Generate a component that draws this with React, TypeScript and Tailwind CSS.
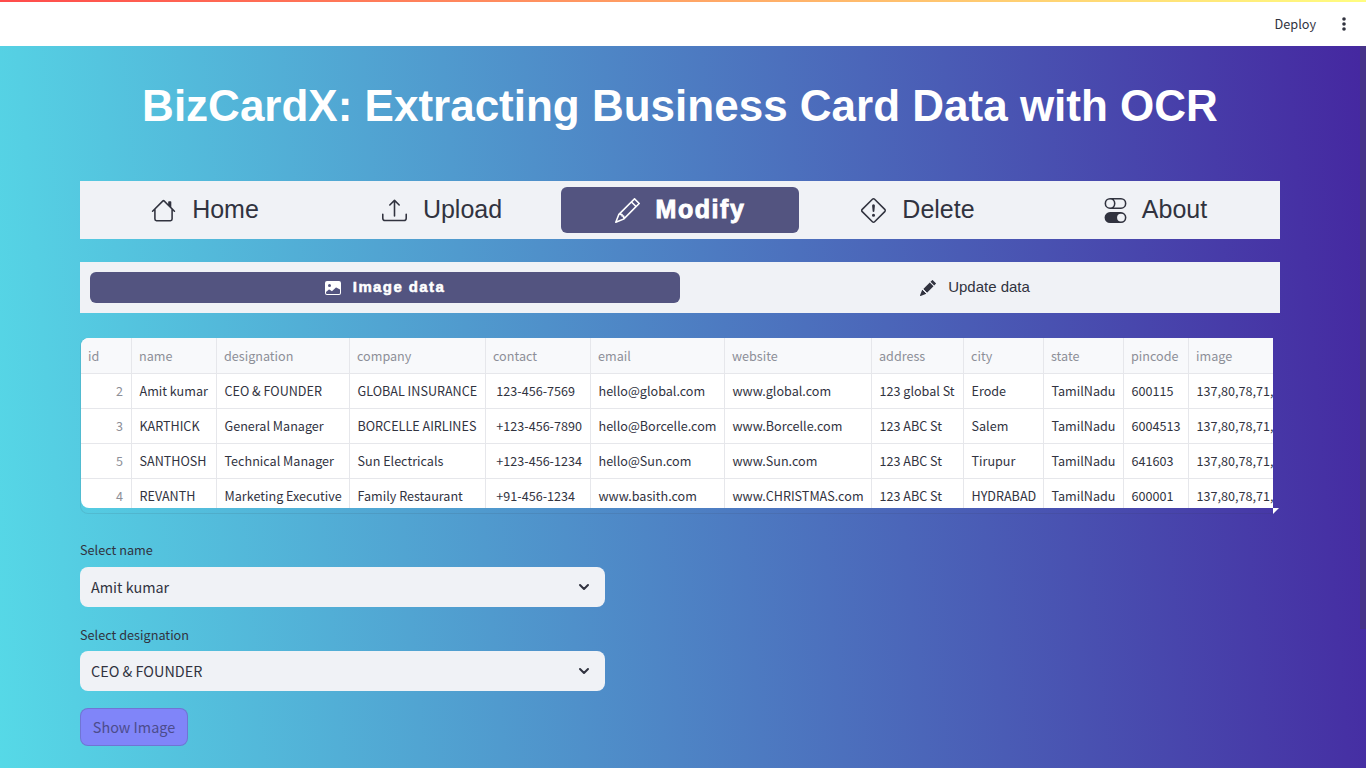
import { BsHouse, BsUpload, BsPencil, BsExclamationDiamond, BsToggles, BsImageFill, BsPencilFill } from "react-icons/bs";
import { ChevronDown } from "lucide-react";
import type { ReactNode } from "react";

const source = "font-['Noto_Sans_CJK_SC','Noto_Sans',sans-serif]";
const arial = "font-['Liberation_Sans',Arial,sans-serif]";

const rows = [
  ["2", "Amit kumar", "CEO & FOUNDER", "GLOBAL INSURANCE", " 123-456-7569", "hello@global.com", "www.global.com", "123 global St", "Erode", "TamilNadu", "600115", "137,80,78,71,13,10,26,10"],
  ["3", "KARTHICK", "General Manager", "BORCELLE AIRLINES", " +123-456-7890", "hello@Borcelle.com", "www.Borcelle.com", "123 ABC St", "Salem", "TamilNadu", "6004513", "137,80,78,71,13,10,26,10"],
  ["5", "SANTHOSH", "Technical Manager", "Sun Electricals", " +123-456-1234", "hello@Sun.com", "www.Sun.com", "123 ABC St", "Tirupur", "TamilNadu", "641603", "137,80,78,71,13,10,26,10"],
  ["4", "REVANTH", "Marketing Executive", "Family Restaurant", " +91-456-1234", "www.basith.com", "www.CHRISTMAS.com", "123 ABC St", "HYDRABAD", "TamilNadu", "600001", "137,80,78,71,13,10,26,10"],
];

const headers = ["id", "name", "designation", "company", "contact", "email", "website", "address", "city", "state", "pincode", "image"];

function NavItem({ icon, label, active, extra = "", gap = "mr-[16px]" }: { icon: ReactNode; label: string; active?: boolean; extra?: string; gap?: string }) {
  return (
    <div className={(active ? "flex items-center justify-center h-[46px] w-[238px] rounded-md bg-[#535480] text-white " : "flex items-center justify-center h-[46px] w-[238px] text-[#31333f] ") + extra}>
      <span className={`${gap} flex`}>{icon}</span>
      <span className={active ? "text-[25px] font-bold tracking-[1.55px] [-webkit-text-stroke:0.9px_white]" : "text-[25px]"}>{label}</span>
    </div>
  );
}

function Select({ label, value, gap = "mt-[7px]" }: { label: string; value: string; gap?: string }) {
  return (
    <div className="w-[525px]">
      <div className="h-[20px] text-[12.7px] leading-[20px] text-[#31333f]">{label}</div>
      <div className={`${gap} flex h-[40px] items-center justify-between rounded-lg bg-[#f0f2f6] pl-[11px] pr-[13px] text-[14.4px] text-[#31333f]`}>
        <span>{value}</span>
        <ChevronDown size={16} strokeWidth={3} />
      </div>
    </div>
  );
}

export default function App() {
  return (
    <div className={`relative h-screen w-full overflow-hidden ${source}`}>
      <header className="relative flex h-[46px] items-center justify-end bg-white pt-[2px]">
        <div className="absolute left-0 right-0 top-0 h-[2px] bg-[linear-gradient(90deg,#ff4b4b,#fffd80)]" />
        <span className="mr-[20px] text-[12.7px] text-[#31333f]">Deploy</span>
        <svg width="16" height="16" viewBox="0 0 16 16" className="mr-[14px] text-[#31333f]" fill="currentColor">
          <circle cx="8" cy="3" r="1.8" />
          <circle cx="8" cy="8" r="1.8" />
          <circle cx="8" cy="13" r="1.8" />
        </svg>
      </header>

      <main className="h-[722px] bg-[linear-gradient(85deg,#56d9e7,#4527a0)] pl-20">
        <div className="w-[1200px]">
          <h1 className={`${arial} pt-[33px] text-center text-[44px] font-bold leading-[54px] text-white`}>
            BizCardX: Extracting Business Card Data with OCR
          </h1>

          <nav className={`${arial} mt-[48px] flex h-[58px] items-center bg-[#f0f2f6] px-[5px]`}>
            <NavItem icon={<BsHouse size={25} />} label="Home" extra="pl-[2px]" />
            <NavItem icon={<BsUpload size={25} />} label="Upload" />
            <NavItem active icon={<BsPencil size={25} />} label="Modify" />
            <NavItem icon={<BsExclamationDiamond size={25} />} label="Delete" />
            <NavItem icon={<BsToggles size={25} />} label="About" gap="mr-[14px]" extra="pr-[2px]" />
          </nav>

          <div className={`${arial} mt-[23px] flex h-[51px] items-center bg-[#f0f2f6] px-[10px]`}>
            <div className="flex h-[31px] w-[590px] items-center justify-center rounded-md bg-[#535480] text-white">
              <BsImageFill size={16} className="mr-[12px]" />
              <span className="text-[15px] font-bold tracking-[1.4px] [-webkit-text-stroke:0.5px_white]">Image data</span>
            </div>
            <div className="flex h-[31px] w-[590px] items-center justify-center text-[#31333f]">
              <BsPencilFill size={16} className="mr-[12px]" />
              <span className="text-[15px]">Update data</span>
            </div>
          </div>

          <div className="relative mt-[25px] h-[176px] w-[1199px] rounded-lg border border-[rgba(49,51,63,0.1)] border-t-0 border-r-0">
            <div className="h-[170px] w-[1192px] overflow-hidden rounded-l-lg bg-white">
              <table className="w-[1260px] table-fixed border-separate border-spacing-0 text-[12.6px]">
                <colgroup>
                  <col className="w-[51px]" />
                  <col className="w-[85px]" />
                  <col className="w-[133px]" />
                  <col className="w-[136px]" />
                  <col className="w-[105px]" />
                  <col className="w-[134px]" />
                  <col className="w-[147px]" />
                  <col className="w-[92px]" />
                  <col className="w-[80px]" />
                  <col className="w-[80px]" />
                  <col className="w-[65px]" />
                  <col className="w-[152px]" />
                </colgroup>
                <thead>
                  <tr>
                    {headers.map((h) => (
                      <th key={h} className="h-[36px] overflow-hidden whitespace-nowrap border-b border-r border-[#e6e7eb] bg-[#f8f9fb] pl-[7px] pt-[2px] text-left font-normal text-[#8d8f98]">
                        {h}
                      </th>
                    ))}
                  </tr>
                </thead>
                <tbody>
                  {rows.map((r) => (
                    <tr key={r[0]}>
                      {r.map((c, i) => (
                        <td
                          key={i}
                          className={
                            i === 0
                              ? "h-[35px] overflow-hidden whitespace-pre border-b border-r border-[#e6e7eb] px-2 text-right text-[#8d8f98]"
                              : "h-[35px] overflow-hidden whitespace-pre border-b border-r border-[#e6e7eb] pl-[7.5px] text-left text-[#31333f]"
                          }
                        >
                          {c}
                        </td>
                      ))}
                    </tr>
                  ))}
                </tbody>
              </table>
            </div>
            <div className="absolute bottom-[-1px] right-0 h-[6px] w-[6px] bg-white [clip-path:polygon(0_0,100%_0,0_100%)]" />
          </div>

          <div className="mt-[26px]">
            <Select label="Select name" value="Amit kumar" />
          </div>
          <div className="mt-[18px]">
            <Select label="Select designation" value="CEO & FOUNDER" gap="mt-[6px]" />
          </div>

          <button className="mt-[17px] flex h-[38px] w-[108px] items-center justify-center rounded-lg border border-[rgba(49,51,63,0.2)] bg-[#8085f9] text-[14.4px] text-[#4c4c8c]">
            Show Image
          </button>
        </div>
      </main>

      <div className="absolute right-0 top-[46px] h-[583px] w-[6px] bg-[#463389]" />
    </div>
  );
}
